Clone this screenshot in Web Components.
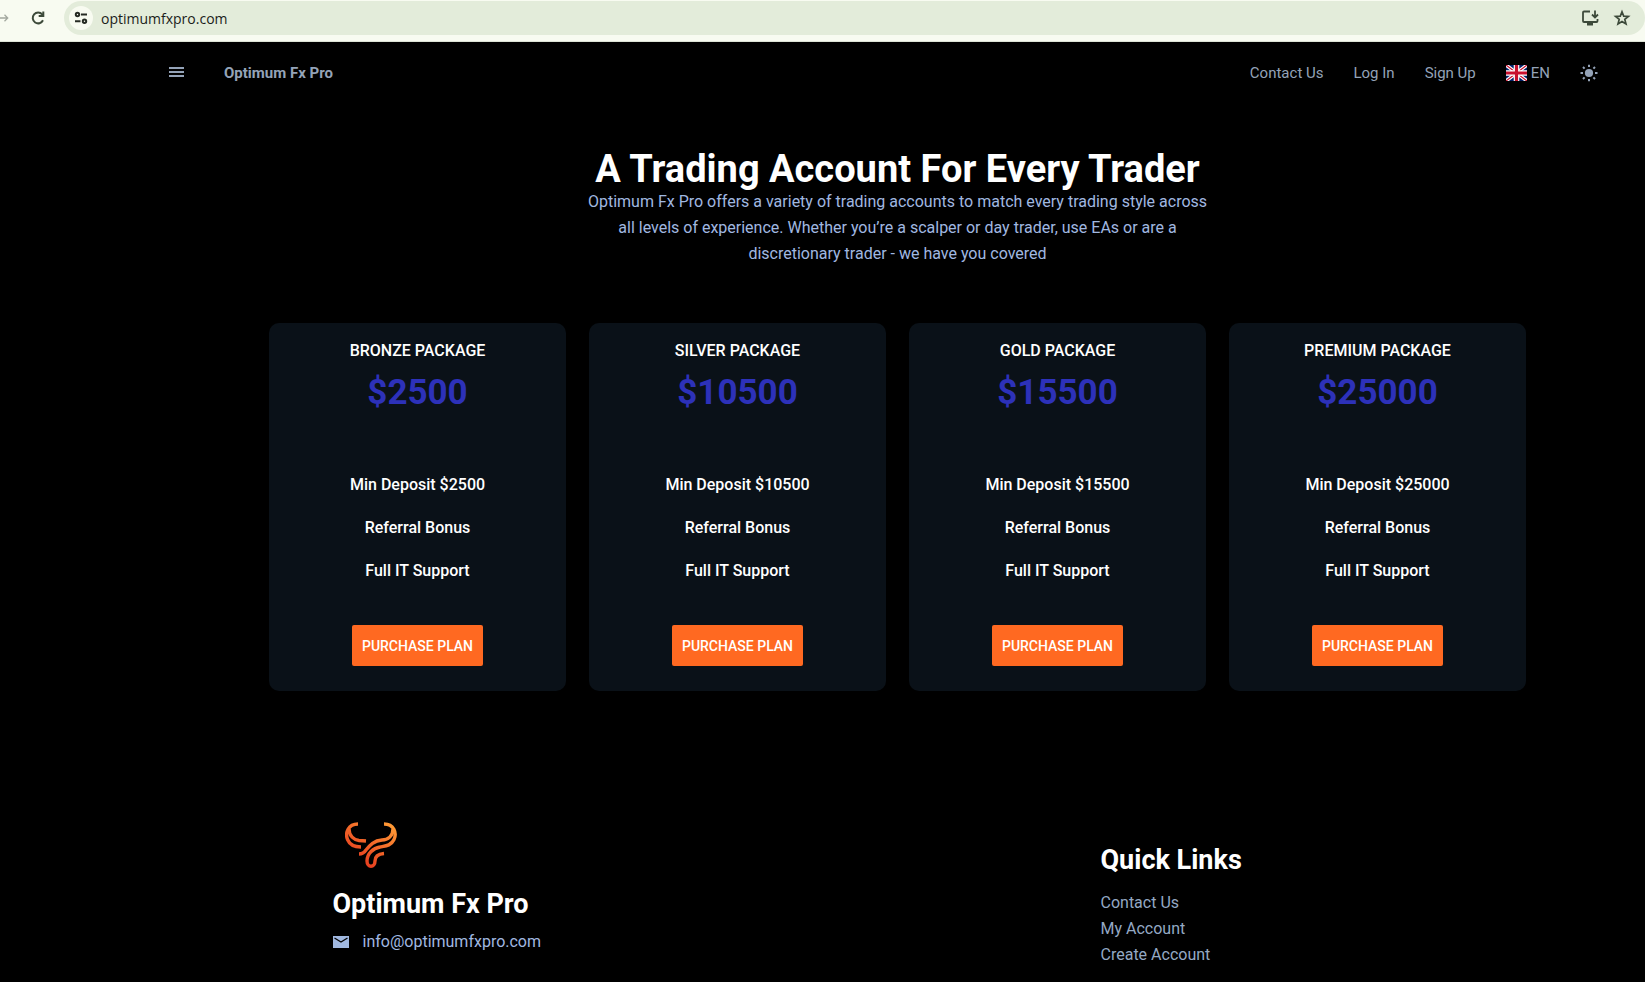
<!DOCTYPE html>
<html lang="en">
<head>
  <meta charset="utf-8">
  <meta name="viewport" content="width=device-width, initial-scale=1">
  <title>Optimum Fx Pro</title>
  <style>
    body {
      margin: 0;
      min-height: 100vh;
      background-color: #000;
      color: #fff;
      font-family: Roboto, "Noto Sans", sans-serif;
      font-size: 16px;
    }
    main {
      padding-left: 150px;
      padding-top: 45px;
    }
    .plans {
      display: grid;
      grid-template-columns: repeat(4, 1fr);
      gap: 23px;
      max-width: 1257px;
      margin: 56px auto 0;
    }
  </style>
</head>
<body>
  <browser-bar url="optimumfxpro.com"></browser-bar>
  <site-nav brand="Optimum Fx Pro">
    <a href="#contact">Contact Us</a>
    <a href="#login">Log In</a>
    <a href="#signup">Sign Up</a>
  </site-nav>
  <main>
    <page-intro>
      <span slot="title">A Trading Account For Every Trader</span>
      Optimum Fx Pro offers a variety of trading accounts to match every trading style across
      all levels of experience. Whether you’re a scalper or day trader, use EAs or are a
      discretionary trader - we have you covered
    </page-intro>
    <section class="plans">
      <plan-card name="BRONZE PACKAGE" price="$2500"></plan-card>
      <plan-card name="SILVER PACKAGE" price="$10500"></plan-card>
      <plan-card name="GOLD PACKAGE" price="$15500"></plan-card>
      <plan-card name="PREMIUM PACKAGE" price="$25000"></plan-card>
    </section>
    <site-footer brand="Optimum Fx Pro" email="info@optimumfxpro.com">
      <a href="#contact">Contact Us</a>
      <a href="#account">My Account</a>
      <a href="#create">Create Account</a>
    </site-footer>
  </main>

  <template id="browser-bar">
    <style>
      :host {
        display: flex;
        align-items: center;
        height: 41px;
        border-bottom: 1px solid #dde3d6;
        background-color: #f8fbf1;
        font-family: "Open Sans", "Noto Sans", sans-serif;
        overflow: hidden;
      }
      button {
        display: flex;
        flex: none;
        padding: 0;
        border: none;
        background: none;
        color: #3d4a3a;
      }
      .forward {
        width: 9px;
        justify-content: flex-end;
        color: #a3a89f;
      }
      .reload {
        margin-left: 19px;
      }
      .address {
        display: flex;
        flex: 1;
        align-items: center;
        height: 34px;
        margin: 0 0 5px 16px;
        padding: 0 14px 0 5px;
        border-radius: 17px;
        background-color: #e3ecda;
      }
      .site {
        align-items: center;
        justify-content: center;
        width: 24px;
        height: 24px;
        border-radius: 50%;
        background-color: #f8fbf1;
      }
      input {
        flex: 1;
        min-width: 0;
        padding: 0 8px;
        border: none;
        outline: none;
        background: none;
        color: #1b1d1a;
        font: inherit;
        font-size: 14px;
      }
      .install {
        margin-right: 14px;
      }
      .forward, .reload {
        margin-bottom: 5px;
      }
    </style>
    <button class="forward" aria-label="Forward">
      <svg width="14" height="14" viewBox="0 0 14 14" fill="none" stroke="currentColor" stroke-width="2"><path d="M0 7h12M7 2l5 5-5 5"/></svg>
    </button>
    <button class="reload" aria-label="Reload">
      <svg width="20" height="20" viewBox="0 0 20 20" fill="none" stroke="currentColor" stroke-width="2"><path d="M15 12.3A5.4 5.4 0 1 1 14.2 6.4L15.3 7.7"/><path d="M15.3 3.5V8.1H10.7"/></svg>
    </button>
    <div class="address">
      <button class="site" aria-label="Site information">
        <svg width="14" height="14" viewBox="0 0 14 14" fill="none" stroke="#262b24" stroke-width="2"><circle cx="3.5" cy="3.5" r="1.7"/><path d="M7 3.5h6M1 10.2h5.500"/><circle cx="10.5" cy="10.2" r="1.7"/></svg>
      </button>
      <input type="text" aria-label="Address">
      <button class="install" aria-label="Install app">
        <svg width="18" height="18" viewBox="0 0 18 18" fill="none" stroke="currentColor" stroke-width="1.8"><path d="M9 2.500H3Q2 2.500 2 3.500V12Q2 13 3 13H15.500Q16.500 13 16.500 12V10"/><path d="M14 1.500V8M11 5.500l3 3 3-3"/><path d="M6 15h6" stroke-width="3"/></svg>
      </button>
      <button aria-label="Bookmark">
        <svg width="18" height="18" viewBox="0 0 18 18" fill="none" stroke="currentColor" stroke-width="1.7"><path d="M9 2.800l1.700 4.300 4.700.3-3.600 3 1.200 4.600L9 12.500 5 15l1.200-4.600-3.600-3 4.700-.3z"/></svg>
      </button>
    </div>
  </template>

  <template id="site-nav">
    <style>
      :host {
        display: flex;
        align-items: center;
        height: 62px;
        padding: 0 47px 0 169px;
        color: #94a3b8;
        font-size: 15px;
      }
      button {
        display: flex;
        align-items: center;
        padding: 0;
        border: none;
        background: none;
        color: inherit;
        font: inherit;
      }
      .brand {
        flex: 1;
        margin-left: 40px;
        font-size: 15px;
        font-weight: 700;
      }
      nav {
        display: flex;
        align-items: center;
        gap: 30px;
      }
      ::slotted(a) {
        color: inherit;
        text-decoration: none;
      }
      .lang {
        gap: 4px;
      }
    </style>
    <button aria-label="Menu">
      <svg width="15" height="16" viewBox="0 0 15 16" stroke="currentColor" stroke-width="2"><path d="M0 3h15M0 7h15M0 11h15"/></svg>
    </button>
    <span class="brand"></span>
    <nav>
      <slot></slot>
      <button class="lang">
        <svg width="21" height="16" viewBox="0 0 21 16">
          <path fill="#012169" d="M0 0h21v16H0z"/>
          <path stroke="#fff" stroke-width="3.5" d="M0 0l21 16M21 0L0 16"/>
          <path stroke="#c8102e" stroke-width="1.2" d="M0 0l21 16M21 0L0 16"/>
          <path stroke="#fff" stroke-width="5.6" d="M10.500 0v16M0 8h21"/>
          <path stroke="#c8102e" stroke-width="3.2" d="M10.500 0v16M0 8h21"/>
        </svg>
        <span>EN</span>
      </button>
      <button aria-label="Toggle theme">
        <svg width="18" height="18" viewBox="0 0 18 18" fill="currentColor" stroke="currentColor" stroke-width="2"><circle cx="9" cy="9" r="4.1" stroke="none"/><path d="M9 .8v2.200M9 15v2.200M.5 9H3M15 9h2.500M3 3l1.600 1.600M13.400 13.400L15 15M15 3l-1.600 1.600M4.600 13.400L3 15"/></svg>
      </button>
    </nav>
  </template>

  <template id="page-intro">
    <style>
      :host {
        display: block;
        max-width: 630px;
        margin: 0 auto;
        text-align: center;
      }
      h1 {
        margin: 0;
        font-size: 38px;
        font-weight: 700;
        line-height: 40px;
        white-space: nowrap;
      }
      p {
        margin: 0;
        color: #a0b8e0;
        line-height: 26px;
      }
    </style>
    <h1><slot name="title"></slot></h1>
    <p><slot></slot></p>
  </template>

  <template id="plan-card">
    <style>
      :host {
        display: flex;
        flex-direction: column;
        align-items: center;
        padding: 15px 16px 25px;
        border-radius: 10px;
        background-color: #0a1118;
        text-align: center;
      }
      h2 {
        margin: 0;
        font-size: 16px;
        font-weight: 500;
        line-height: 26px;
      }
      .price {
        margin: 7px 0 48px;
        color: #2d31b9;
        font-size: 35px;
        font-weight: 700;
        line-height: 44px;
      }
      ul {
        margin: 0;
        padding: 0;
        list-style-type: none;
      }
      li {
        padding: 8px 0;
        font-weight: 500;
        line-height: 27px;
      }
      button {
        min-width: 131px;
        height: 41px;
        margin-top: 33px;
        padding: 0 8px;
        border: none;
        border-radius: 2px;
        background-color: #ff6921;
        color: #fff;
        font: inherit;
        font-size: 14px;
        font-weight: 500;
      }
    </style>
    <h2></h2>
    <div class="price"></div>
    <ul>
      <li class="deposit"></li>
      <li>Referral Bonus</li>
      <li>Full IT Support</li>
    </ul>
    <button>PURCHASE PLAN</button>
  </template>

  <template id="site-footer">
    <style>
      :host {
        display: grid;
        grid-template-columns: 3fr 2fr;
        max-width: 1280px;
        margin: 125px auto 0;
        color: #a0b8e0;
      }
      .about, .links {
        padding-left: 75px;
      }
      .links {
        padding-top: 24px;
      }
      .logo {
        display: block;
        margin: 6px 0 0 12px;
      }
      h2 {
        margin: 0;
        color: #fff;
        font-size: 27px;
        font-weight: 700;
        line-height: 40px;
      }
      .about h2 {
        margin-top: 16px;
      }
      .mail {
        display: flex;
        align-items: center;
        gap: 14px;
        margin-top: 5px;
        color: inherit;
        line-height: 26px;
        text-decoration: none;
      }
      nav {
        display: flex;
        flex-direction: column;
        align-items: flex-start;
        margin-top: 10px;
        color: #94a9c4;
      }
      ::slotted(a) {
        color: inherit;
        line-height: 26px;
        text-decoration: none;
      }
    </style>
    <div class="about">
      <svg class="logo" width="52" height="46" viewBox="0 0 52 46" fill="none" stroke="url(#flame)" stroke-width="3.4">
        <defs>
          <linearGradient id="flame" gradientUnits="userSpaceOnUse" x1="46" y1="2" x2="18" y2="44">
            <stop offset="0" stop-color="#ff9a35"/>
            <stop offset="1" stop-color="#e63a1e"/>
          </linearGradient>
        </defs>
        <path d="M13 2C3 2 0 11 2.500 17.500C5 23.500 10 25 16 25"/>
        <path d="M4 7C4 14 9 18 14 18.500L21 19"/>
        <path d="M39 2C49 2 52 11 49 17.500C46 24 40 24 35 25C28 26 22 32 22 39C22 46 30 46 30 39C30 34 33 32 39 31.500"/>
        <path d="M48 7C48 14 43 18 37 18C29 18.500 25 23 21 28C19 31 17 32 14 32"/>
      </svg>
      <h2 class="brand"></h2>
      <a class="mail">
        <svg width="16" height="14" viewBox="0 0 16 14"><path fill="currentColor" d="M0 1h16v12H0z"/><path d="M1.500 3L8 7l6.500-4" fill="none" stroke="#000" stroke-width="1.3"/></svg>
        <span class="email"></span>
      </a>
    </div>
    <div class="links">
      <h2>Quick Links</h2>
      <nav><slot></slot></nav>
    </div>
  </template>

  <script>
    // clone the template that has the element's own tag name
    class BaseElement extends HTMLElement {
      constructor() {
        super()
        const $template = document.getElementById(this.localName)
        const shadowRoot = this.attachShadow({ mode: 'open' })
        shadowRoot.appendChild($template.content.cloneNode(true))
      }

      setText(selector, text) {
        this.shadowRoot.querySelector(selector).textContent = text
      }
    }

    window.customElements.define('browser-bar', class extends BaseElement {
      connectedCallback() {
        this.shadowRoot.querySelector('input').value = this.getAttribute('url')
      }
    })

    window.customElements.define('site-nav', class extends BaseElement {
      connectedCallback() {
        this.setText('.brand', this.getAttribute('brand'))
      }
    })

    window.customElements.define('page-intro', class extends BaseElement {})

    window.customElements.define('plan-card', class extends BaseElement {
      connectedCallback() {
        const price = this.getAttribute('price')
        this.setText('h2', this.getAttribute('name'))
        this.setText('.price', price)
        this.setText('.deposit', `Min Deposit ${price}`)
      }
    })

    window.customElements.define('site-footer', class extends BaseElement {
      connectedCallback() {
        const email = this.getAttribute('email')
        this.setText('.brand', this.getAttribute('brand'))
        this.setText('.email', email)
        this.shadowRoot.querySelector('.mail').href = `mailto:${email}`
      }
    })
  </script>
</body>
</html>
